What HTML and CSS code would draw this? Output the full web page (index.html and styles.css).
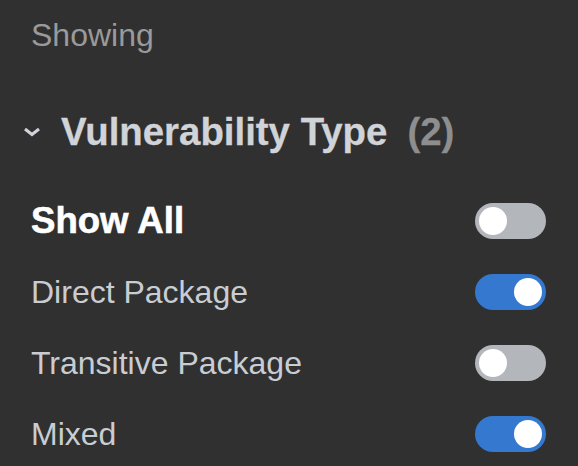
FILE: index.html
```html
<!DOCTYPE html>
<html>
<head>
<meta charset="utf-8">
<link rel="stylesheet" href="styles.css">
</head>
<body>
<div class="panel">
  <div class="showing">Showing</div>
  <div class="heading">
    <svg class="chevron" width="18" height="10" viewBox="0 0 18 10"><path d="M2 2 L9 7.5 L16 2" fill="none" stroke="#d0d3d8" stroke-width="3" stroke-linecap="butt" stroke-linejoin="miter"/></svg>
    <span class="title">Vulnerability Type</span>
    <span class="count">(2)</span>
  </div>
  <div class="rows">
    <div class="row">
      <span class="label label-all">Show All</span>
      <span class="toggle"><span class="knob"></span></span>
    </div>
    <div class="row">
      <span class="label">Direct Package</span>
      <span class="toggle on"><span class="knob"></span></span>
    </div>
    <div class="row">
      <span class="label">Transitive Package</span>
      <span class="toggle"><span class="knob"></span></span>
    </div>
    <div class="row">
      <span class="label">Mixed</span>
      <span class="toggle on"><span class="knob"></span></span>
    </div>
  </div>
</div>
</body>
</html>
```

FILE: styles.css
```css
html, body {
  margin: 0;
  padding: 0;
  background: #303030;
}
body {
  font-family: "Liberation Sans", Arial, sans-serif;
  width: 578px;
  height: 466px;
  overflow: hidden;
}
.panel {
  padding: 15px 32px 0 31px;
}
.showing {
  font-size: 32px;
  line-height: 40px;
  color: #9a9a9a;
}
.heading {
  margin-top: 55px;
  margin-left: -8px;
  display: flex;
  align-items: center;
  height: 44px;
}
.chevron {
  display: block;
  margin-right: 20px;
}
.title {
  font-size: 38.4px;
  font-weight: bold;
  color: #d0d3d8;
  line-height: 44px;
  -webkit-text-stroke: 0.3px #d0d3d8;
}
.count {
  font-size: 38.4px;
  font-weight: bold;
  color: #8e8e8e;
  line-height: 44px;
  margin-left: 20px;
  -webkit-text-stroke: 0.3px #8e8e8e;
}
.rows {
  margin-top: 31px;
}
.row {
  height: 71px;
  display: flex;
  align-items: center;
  justify-content: space-between;
}
.label {
  font-size: 32px;
  line-height: 38px;
  color: #c9cdd3;
}
.label-all {
  font-size: 36.6px;
  font-weight: bold;
  color: #ffffff;
  -webkit-text-stroke: 0.6px #ffffff;
}
.toggle {
  width: 71px;
  height: 36px;
  border-radius: 18px;
  background: #b3b6ba;
  display: flex;
  align-items: center;
  padding: 0 4px;
  box-sizing: border-box;
}
.toggle.on {
  background: #3478d0;
  justify-content: flex-end;
}
.knob {
  width: 28px;
  height: 28px;
  border-radius: 50%;
  background: #ffffff;
}
```
